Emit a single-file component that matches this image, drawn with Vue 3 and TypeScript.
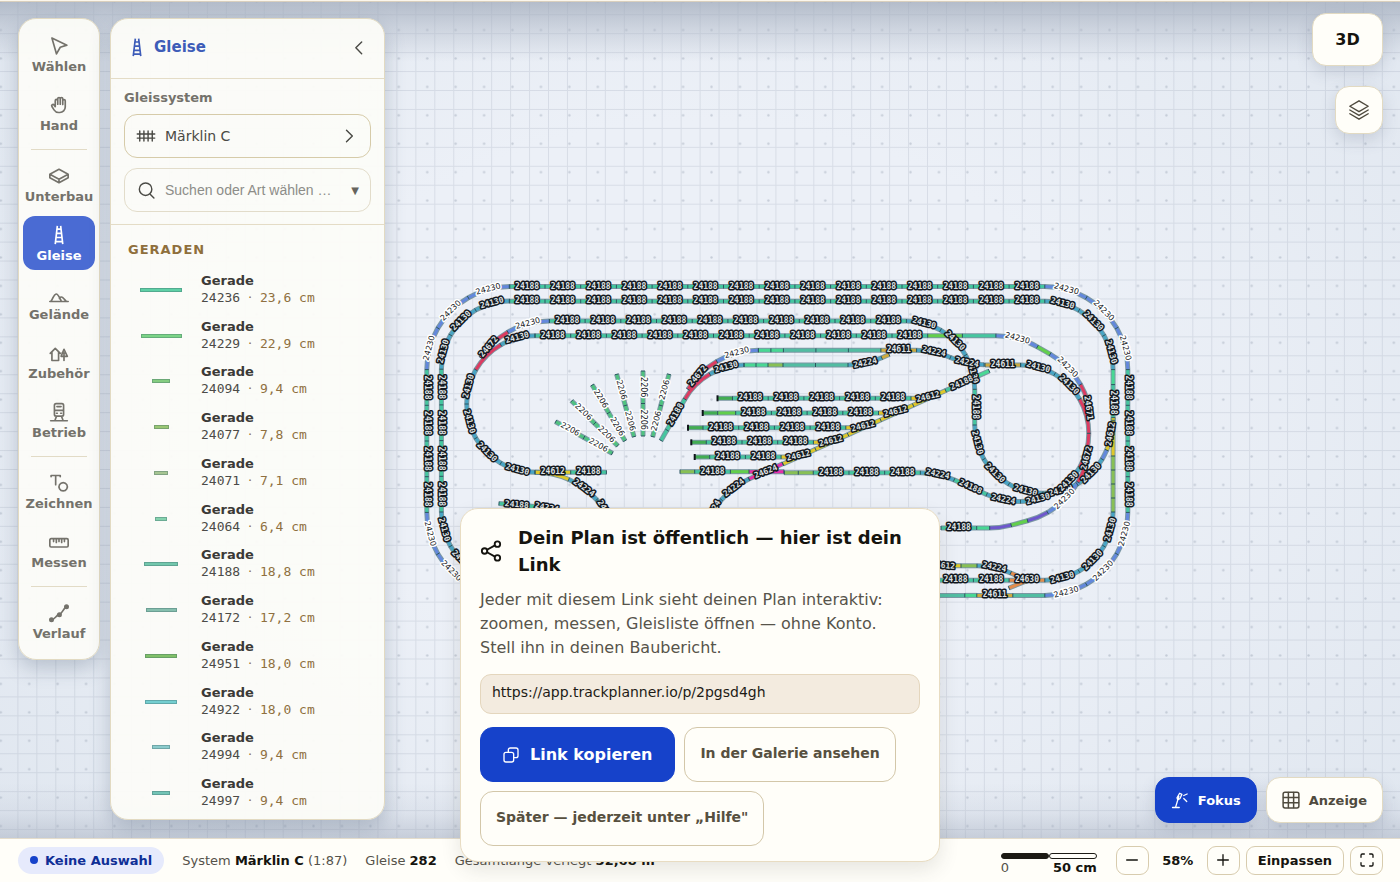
<script setup lang="ts">
import { ref } from 'vue'

interface Piece { len?: number; r?: number; deg?: number; color: string; label?: string; light?: boolean }
interface Drawn { d: string; color: string }
interface Tick { x1: number; y1: number; x2: number; y2: number }
interface Label { x: number; y: number; a: number; text: string; light: boolean }

const TEAL = '#45c69f', SEA = '#52bda2', MINT = '#48d894', SKY = '#48a5c4', BLUE = '#6388dc', RED = '#dc3c62'
const YEL = '#dfc82a', OCHRE = '#cdaa40', ORANGE = '#e28c4c', GREEN = '#62cf4c', MOSS = '#88c055', DARK = '#42ad52'
const PINK = '#e62eaa', VIOLET = '#6e58cc', LEAF = '#4fc280'
const UNIT = 35.7, R1 = 68.3, R2 = 83

const drawn: Drawn[] = []
const ticks: Tick[] = []
const labels: Label[] = []

const rad = (d: number) => (d * Math.PI) / 180
const f = (n: number) => Math.round(n * 100) / 100

function upright(a: number): number {
  let v = ((a % 360) + 360) % 360
  if (v > 180) v -= 360
  if (v > 91) v -= 180
  if (v <= -89) v += 180
  return v
}
function mark(x: number, y: number, h: number) {
  const nx = -Math.sin(rad(h)) * 2, ny = Math.cos(rad(h)) * 2
  ticks.push({ x1: f(x - nx), y1: f(y - ny), x2: f(x + nx), y2: f(y + ny) })
}
function tag(x: number, y: number, a: number, text: string, light = false) {
  labels.push({ x: f(x), y: f(y), a: f(a), text, light })
}
function lay(x: number, y: number, h: number, pieces: Piece[]) {
  mark(x, y, h)
  for (const p of pieces) {
    let nx = x, ny = y, mx = x, my = y, mh = h, nh = h, d = ''
    if (p.len !== undefined) {
      nx = x + Math.cos(rad(h)) * p.len
      ny = y + Math.sin(rad(h)) * p.len
      mx = (x + nx) / 2
      my = (y + ny) / 2
      d = `M${f(x)} ${f(y)}L${f(nx)} ${f(ny)}`
    } else {
      const r = p.r ?? R1, deg = p.deg ?? 30, s = deg > 0 ? 1 : -1
      const cx = x - Math.sin(rad(h)) * r * s, cy = y + Math.cos(rad(h)) * r * s
      nh = h + deg
      mh = h + deg / 2
      nx = cx + Math.sin(rad(nh)) * r * s
      ny = cy - Math.cos(rad(nh)) * r * s
      mx = cx + Math.sin(rad(mh)) * r * s
      my = cy - Math.cos(rad(mh)) * r * s
      d = `M${f(x)} ${f(y)}A${r} ${r} 0 0 ${s > 0 ? 1 : 0} ${f(nx)} ${f(ny)}`
    }
    drawn.push({ d, color: p.color })
    if (p.label) tag(mx, my, upright(mh), p.label, p.light)
    x = nx
    y = ny
    h = nh
    mark(x, y, h)
  }
}
const many = (n: number, p: Piece): Piece[] => Array.from({ length: n }, () => p)
const bar = (len: number, color: string, label?: string): Piece => ({ len, color, label })
const S: Piece = bar(UNIT, TEAL, '24188')
const c1 = (s: number): Piece => ({ r: R1, deg: 30 * s, color: SKY, label: '24130' })
const c2 = (s: number): Piece => ({ r: R2, deg: 30 * s, color: BLUE, label: '24230', light: true })
const bend = (r: number, deg: number, color: string, label?: string): Piece => ({ r, deg, color, label })

// double main loop
lay(509.3, 286.6, 0, [...many(15, S), ...many(3, c2(1)), ...many(4, S), ...many(3, c2(1)),
  bar(32, SEA), bar(36, OCHRE, '24611'), bar(12, MINT), bar(455, SEA), ...many(3, c2(1)), ...many(4, S), ...many(3, c2(1))])
lay(509.3, 301.3, 0, [...many(15, S), ...many(3, c1(1)), bar(15, MINT), S, bar(UNIT, YEL), ...many(4, bar(14, MOSS)),
  ...many(3, c1(1)), bar(UNIT, ORANGE, '24630'), S, S, bar(428, TEAL), ...many(3, c1(1)), ...many(4, S), ...many(3, c1(1))])

// inner western curve
lay(535, 335.7, 180, [c1(-1), bend(R1, -30, RED), ...many(4, c1(-1)), bar(UNIT, YEL, '24612'), S])
lay(549.4, 321, 180, [c2(-1), bend(R2, -26, RED)])
lay(535, 472.3, 0, [bend(R2, 24, YEL), bend(R2, 24, SKY, '24224'), bend(R1, 24, SKY, '24224')])
lay(499, 503.5, 5, [S, bar(5, MINT), bend(R2, 10, SKY, '24224')])

// inner upper tracks and eastern curve
lay(549.4, 321, 0, [...many(10, S), ...many(3, c1(1)), S, ...many(5, c1(-1)), bend(R2, -7, BLUE), bend(R2, -23, YEL)])
lay(535, 335.7, 0, [...many(11, S), bar(34.7, GREEN), bar(33.5, TEAL), c2(1), bar(14.7, GREEN), c2(1), bend(R1, 30, RED)])
lay(1020.5, 365, 0, [c1(1), c1(1), bend(R1, 30, RED), bend(R1, 30, RED), c1(1), c1(1), bend(R2, 24, SKY, '24224'),
  S, bend(R2, -24, SKY, '24224'), ...many(3, S), bar(15, MOSS), bar(14, MOSS)])
lay(941, 528, 0, [S, bar(13, MINT), bend(R2, -15, VIOLET), bar(17, GREEN), bend(R2, -15, VIOLET), c2(-1), bend(R2, -26, RED)])

// middle return curve
lay(758.4, 350.3, 180, [c2(-1), bend(R2, -28, RED)])
lay(744, 365, 180, [c1(-1), bend(R1, -30, RED), S, bar(12, TEAL)])
lay(758.4, 350.3, 0, [bar(12.5, MINT), bar(12.5, MINT), bar(32.5, SEA), bar(32.5, SEA), bar(32.5, SEA), bar(UNIT, OCHRE, '24611'),
  bend(R2, 24, SKY, '24224'), bend(R2, -24, SKY, '24224')])
lay(744, 365, 0, [bar(12, MINT), bar(12, MINT), bar(15, MOSS), bar(32.5, SEA), bar(32.5, SEA), bend(R2, -24, SKY, '24224'), bar(8, OCHRE)])
lay(985, 365, 0, [bar(UNIT, OCHRE, '24611')])

// yard ladder
lay(783, 464, -24.3, [bar(UNIT, YEL), bar(UNIT, YEL), bar(UNIT, YEL), bar(UNIT, YEL), bar(UNIT, YEL), S, bar(12, MINT)])
lay(749, 479, -24.3, [bar(37, PINK)])
lay(749, 479, 155, [bend(R2, -24, SKY, '24224'), bend(R2, -20, SKY, '24224')])
const yard = [
  { y: 398.3, x: 717.5, lead: [bar(15, DARK)], n: 5 },
  { y: 413, x: 702.7, lead: [bar(15, DARK), bar(18, GREEN)], n: 4 },
  { y: 427.7, x: 688, lead: [bar(15, DARK)], n: 4 },
  { y: 442.3, x: 691.3, lead: [bar(15, DARK)], n: 3 },
  { y: 457, x: 694.7, lead: [bar(15, DARK)], n: 2 },
]
for (const row of yard) lay(row.x, row.y, 0, [...row.lead, ...many(row.n, S), bar(14, YEL)])
lay(680, 471.7, 0, [bar(14.7, MOSS), S, bar(18.6, GREEN), bar(35, PINK)])

// south-east junction
lay(925, 565.8, 0, [bar(36, YEL), bar(16, MOSS), bend(R2, 24, SKY, '24224'), bar(18, ORANGE)])
lay(1009, 588, -22, [bar(18, ORANGE)])

// turntable spokes
const spokes = [
  [555.7, 421.7, 612.3, 453.3], [571.7, 401, 617.7, 445.7], [592.3, 385, 625, 440.7],
  [616.7, 374.3, 634, 436.7], [643, 371, 643, 436], [669, 374.3, 652.7, 436.7],
]
for (const [x1, y1, x2, y2] of spokes) {
  const len = Math.hypot(x2 - x1, y2 - y1) / 2
  const h = (Math.atan2(y2 - y1, x2 - x1) * 180) / Math.PI
  lay(x1, y1, h, many(2, { len, color: LEAF, label: '2206', light: true }))
}

tag(489, 347, -50, '24672')
tag(698, 376, -50, '24672')
tag(1088, 408, 82, '24671')
tag(1087, 458, -76, '24672')
tag(1111, 434, -80, '24612')
tag(766, 472, -22, '24624')
tag(943, 566, 5, '24612')
for (let i = 0; i < 5; i++) tag(798.5 + i * 32.4, 456 - i * 14.7, -14, '24612')

const systemName = 'Märklin C'
const tools = ref([
  { id: 'select', name: 'Wählen' }, { id: 'hand', name: 'Hand' }, { id: '-1', name: '' },
  { id: 'base', name: 'Unterbau' }, { id: 'track', name: 'Gleise' }, { id: 'terrain', name: 'Gelände' },
  { id: 'props', name: 'Zubehör' }, { id: 'train', name: 'Betrieb' }, { id: '-2', name: '' },
  { id: 'draw', name: 'Zeichnen' }, { id: 'measure', name: 'Messen' }, { id: '-3', name: '' },
  { id: 'profile', name: 'Verlauf' },
])
const active = ref('track')
const parts = [
  { no: '24236', cm: '23,6', w: 42, c: '#5fd0a6' }, { no: '24229', cm: '22,9', w: 41, c: '#7bd486' },
  { no: '24094', cm: '9,4', w: 18, c: '#84cc80' }, { no: '24077', cm: '7,8', w: 15, c: '#9ac774' },
  { no: '24071', cm: '7,1', w: 14, c: '#a6c592' }, { no: '24064', cm: '6,4', w: 12, c: '#85d2ae' },
  { no: '24188', cm: '18,8', w: 34, c: '#72c7ac' }, { no: '24172', cm: '17,2', w: 31, c: '#86bfae' },
  { no: '24951', cm: '18,0', w: 32, c: '#80c068' }, { no: '24922', cm: '18,0', w: 32, c: '#74ced0' },
  { no: '24994', cm: '9,4', w: 18, c: '#8bcbcc' }, { no: '24997', cm: '9,4', w: 18, c: '#72c4b6' },
]
const search = ref('')
const link = ref('https://app.trackplanner.io/p/2pgsd4gh')
</script>

<template>
  <div class="app">
    <svg class="canvas" aria-label="Gleisplan">
      <defs>
        <pattern id="grid" x="17.4" y="14.2" width="18.95" height="18.95" patternUnits="userSpaceOnUse">
          <path d="M0 .5H18.95M.5 0V18.95" class="gridline" />
        </pattern>
        <pattern id="dots" x="15" y="15.8" width="28.43" height="28.43" patternUnits="userSpaceOnUse">
          <circle cx="14.2" cy="14.2" r="1.2" class="griddot" />
        </pattern>
      </defs>
      <rect width="100%" height="100%" fill="url(#grid)" />
      <rect width="100%" height="100%" fill="url(#dots)" />
      <g class="bed"><path v-for="(p, i) in drawn" :key="i" :d="p.d" /></g>
      <g class="rail"><path v-for="(p, i) in drawn" :key="i" :d="p.d" :stroke="p.color" /></g>
      <g class="tick"><line v-for="(t, i) in ticks" :key="i" v-bind="t" /></g>
      <g class="stop"><path v-for="r in yard" :key="r.y" :d="`M${r.x} ${r.y - 3}v6`" /></g>
      <g>
        <text v-for="(l, i) in labels" :key="i" :class="['tag', { light: l.light }]" :transform="`translate(${l.x} ${l.y}) rotate(${l.a})`" y="2">{{ l.text }}</text>
      </g>
    </svg>
    <div class="shade"></div>
    <div class="topline"></div>

    <main class="stage">
      <nav class="tools" aria-label="Werkzeuge">
        <template v-for="t in tools" :key="t.id">
          <hr v-if="!t.name">
          <button v-else type="button" class="tool" :class="{ on: active === t.id }" @click="active = t.id">
            <svg viewBox="0 0 24 24" class="ico" aria-hidden="true">
              <path v-if="t.id === 'select'" d="M3.5 2.500l18 8.500-8 2.500-4.500 8z" />
              <path v-else-if="t.id === 'hand'" d="M7.5 14V6.800a1.500 1.500 0 0 1 3 0V11V4.500a1.500 1.500 0 0 1 3 0V11V4.500a1.500 1.500 0 0 1 3 0V11.500V7a1.500 1.500 0 0 1 3 0v7.500a6.500 6.500 0 0 1-6.500 6.500h-1.500c-2.500 0-4.200-1.200-5.500-3.200l-2.500-4a1.500 1.500 0 0 1 2.500-1.700z" />
              <path v-else-if="t.id === 'base'" d="M12 4L1 10l11 6 11-6zM1 10v4l11 6 11-6v-4M12 16v4" />
              <path v-else-if="t.id === 'track'" class="lattice" d="M10 1L7.500 23M14 1L16.500 23M9.500 5h5M9 10h6M8.500 15h7M8 20h8" />
              <path v-else-if="t.id === 'terrain'" d="M1 21h22M2.500 20.500C5 17.500 5.500 12.500 8.500 12c2.500-.300 4 4.500 6 8M12.500 17.500c1-2 2.500-2.500 4-1.200s2 2.500 4 4.200" />
              <path v-else-if="t.id === 'props'" d="M1.500 12.500L7.500 6.500l6 6M3.500 11v10h8V11M18 21V13M14.500 16L18 7.500 22 16zM15.500 12h4.500" />
              <path v-else-if="t.id === 'train'" d="M6.500 4a2 2 0 0 1 2-2h7a2 2 0 0 1 2 2v11a2 2 0 0 1-2 2h-7a2 2 0 0 1-2-2zM6.500 10h11M9.500 5.500h5M9 13.500h1M14 13.500h1M9 17l-2 5.500M15 17l2 5.500M2 22.500h20" />
              <path v-else-if="t.id === 'draw'" d="M2.500 4.500V3h11v1.500M8 3v11M17 11.500a5 5 0 1 0 .010 0z" />
              <path v-else-if="t.id === 'measure'" d="M2.500 8h19a1.500 1.500 0 0 1 1.500 1.500v7a1.500 1.500 0 0 1-1.500 1.500h-19A1.500 1.500 0 0 1 1 16.500v-7A1.500 1.500 0 0 1 2.500 8zM5.500 8v3.500M8.800 8v4.500M12 8v3.500M15.200 8v4.500M18.500 8v3.500" />
              <g v-else><path d="M3 20c5-1 5-5 9-6s4-6 9-10" /><circle cx="3" cy="20" r="2" class="solid" /><circle cx="12.500" cy="14" r="2" class="solid" /><circle cx="21" cy="4.500" r="2" class="solid" /></g>
            </svg>
            <span>{{ t.name }}</span>
          </button>
        </template>
      </nav>

      <aside class="panel">
        <header class="phead">
          <svg viewBox="0 0 24 24" class="ico lattice" aria-hidden="true"><path d="M10 2L7.500 23M14 2L16.500 23M9.500 6h5M9 11h6M8.500 16h7M8 20.500h8" /></svg>
          <h2>Gleise</h2>
          <button type="button" class="bare" aria-label="Einklappen"><svg viewBox="0 0 24 24" class="ico thin"><path d="M14 6l-7 7 7 7" /></svg></button>
        </header>
        <section class="filters">
          <span class="caption" id="sys">Gleissystem</span>
          <button type="button" class="field" aria-labelledby="sys">
            <svg viewBox="0 0 24 24" class="ico thin"><path d="M1.500 9.500h21M1.500 14.500h21M4.500 6v12M9.500 6v12M14.500 6v12M19.500 6v12" /></svg>
            <span>{{ systemName }}</span>
            <svg viewBox="0 0 24 24" class="ico thin"><path d="M9 5l7 7-7 7" /></svg>
          </button>
          <div class="field find">
            <svg viewBox="0 0 24 24" class="ico thin"><circle cx="11.500" cy="11" r="7.500" /><path d="M17 17l4.500 4.500" /></svg>
            <input v-model="search" type="text" aria-label="Gleise suchen" placeholder="Suchen oder Art wählen …">
            <button type="button" class="bare caret" aria-label="Art wählen">▼</button>
          </div>
        </section>
        <h3>GERADEN</h3>
        <ul class="parts">
          <li v-for="p in parts" :key="p.no">
            <button type="button" class="part">
              <span class="pic"><i :style="{ width: p.w + 'px', background: p.c }"></i></span>
              <span class="txt"><b>Gerade</b><code>{{ p.no }} <em><s>·</s> {{ p.cm }} cm</em></code></span>
            </button>
          </li>
        </ul>
      </aside>

      <div class="views">
        <button type="button" class="card three">3D</button>
        <button type="button" class="card layers" aria-label="Ebenen"><svg viewBox="0 0 24 24" class="ico thin"><path d="M12 1L1 7.500l11 6.500 11-6.500zM1 12l11 6.500L23 12M1 16.500L12 23l11-6.500" /></svg></button>
      </div>

      <div class="modes">
        <button type="button" class="card focus"><svg viewBox="0 0 24 24" class="ico thin"><path d="M2 22h9M6 22l4.500-15M9 12l-1-3 3.500-6 3 1.500-2.500 5.500zM17 6l4.500-2M17 10l4 4" /></svg>Fokus</button>
        <button type="button" class="card show"><svg viewBox="0 0 24 24" class="ico"><rect x="1.500" y="1.500" width="21" height="21" rx="2.500" /><path d="M2 8.500h20M2 15.500h20M8.500 2v20M15.500 2v20" /></svg>Anzeige</button>
      </div>
    </main>

    <footer class="status">
      <span class="chip"><i></i>Keine Auswahl</span>
      <span>System <b>{{ systemName }}</b> (1:87)</span>
      <span>Gleise <b>282</b></span>
      <span>Gesamtlänge verlegt <b>52,68 m</b></span>
      <div class="zoom">
        <div class="scale"><div class="ruler"><i></i><i></i></div><div class="ends"><span>0</span><b>50 cm</b></div></div>
        <button type="button" aria-label="Verkleinern"><svg viewBox="0 0 24 24" class="ico"><path d="M4 12h16" /></svg></button>
        <b class="pct">58%</b>
        <button type="button" aria-label="Vergrößern"><svg viewBox="0 0 24 24" class="ico"><path d="M4 12h16M12 4v16" /></svg></button>
        <button type="button" class="fit">Einpassen</button>
        <button type="button" aria-label="Vollbild"><svg viewBox="0 0 24 24" class="ico"><path d="M3 8V5a2 2 0 0 1 2-2h3M16 3h3a2 2 0 0 1 2 2v3M21 16v3a2 2 0 0 1-2 2h-3M8 21H5a2 2 0 0 1-2-2v-3" /></svg></button>
      </div>
    </footer>

    <section class="share" role="dialog" aria-labelledby="share-title">
      <header>
        <svg viewBox="0 0 24 24" class="ico"><circle cx="5" cy="12" r="3" /><circle cx="19" cy="4.500" r="3" /><circle cx="19" cy="19.500" r="3" /><path d="M7.700 10.600l8.600-4.700M7.700 13.400l8.600 4.700" /></svg>
        <h1 id="share-title">Dein Plan ist öffentlich — hier ist dein Link</h1>
      </header>
      <p>Jeder mit diesem Link sieht deinen Plan interaktiv: zoomen, messen, Gleisliste öffnen — ohne Konto. Stell ihn in deinen Baubericht.</p>
      <input v-model="link" type="text" readonly aria-label="Link zum Plan">
      <div class="acts">
        <button type="button" class="primary"><svg viewBox="0 0 24 24" class="ico"><rect x="1.500" y="8" width="14.500" height="14.500" rx="3" /><path d="M8 8V4.500a3 3 0 0 1 3-3h8.500a3 3 0 0 1 3 3V13a3 3 0 0 1-3 3H16" /></svg>Link kopieren</button>
        <button type="button">In der Galerie ansehen</button>
        <button type="button">Später — jederzeit unter „Hilfe"</button>
      </div>
    </section>
  </div>
</template>

<style>
body { margin: 0; }
</style>

<style scoped>
* { box-sizing: border-box; }
.app {
  position: relative; display: flex; flex-direction: column; height: 100vh; overflow: hidden;
  font-family: "DejaVu Sans", sans-serif; font-size: 13px; color: #4a4a45;
  background: radial-gradient(ellipse at 50% 45%, #ecf0f7 40%, #dfe6ef 100%);
}
button, input { font: inherit; color: inherit; margin: 0; }
button { cursor: pointer; }
.canvas { position: absolute; inset: 0; width: 100%; height: 100%; }
.gridline { stroke: #8592a5; stroke-opacity: .2; fill: none; }
.griddot { fill: #7e8a9c; fill-opacity: .34; }
.bed path { fill: none; stroke: #4b7480; stroke-opacity: .7; stroke-width: 5; }
.rail path { fill: none; stroke-width: 3; }
.tick line { stroke: #2b5560; stroke-width: 1; }
.stop path { stroke: #10151b; stroke-width: 2; }
.tag {
  font: 700 8px "DejaVu Sans Mono", monospace; text-anchor: middle; fill: #dfe3e6;
  stroke: #14181e; stroke-width: 3px; stroke-linejoin: round; paint-order: stroke;
}
.tag.light { font: 400 8px "DejaVu Sans", sans-serif; fill: #15181d; stroke: #fff; }
.shade {
  position: absolute; inset: 0 0 44px; pointer-events: none;
  background: linear-gradient(rgba(160, 170, 186, .75) 0, rgba(172, 181, 196, .45) 28px, rgba(200, 208, 220, 0) 62px),
    linear-gradient(0deg, rgba(160, 169, 186, .45), rgba(180, 188, 204, .2) 25px, rgba(190, 198, 214, 0) 55px);
}
.topline { position: relative; flex: none; height: 2px; background: #fbf6ec; border-bottom: 1px solid #d9cfbd; }
.stage { position: relative; flex: 1; min-height: 0; display: flex; align-items: flex-start; gap: 10px; padding: 16px 18px 18px; }
.ico { width: 20px; height: 20px; flex: none; fill: none; stroke: currentColor; stroke-width: 2; stroke-linecap: round; stroke-linejoin: round; }
.ico.thin { stroke-width: 1.7; }
.solid { fill: currentColor; }
.lattice { stroke-linecap: butt; }

.tools, .panel {
  background: rgba(252, 252, 248, .95); border: 1px solid #e2dac2; border-radius: 18px;
  box-shadow: 0 8px 20px rgba(70, 85, 110, .28);
}
.tools { width: 82px; padding: 8px 4px 11px; display: flex; flex-direction: column; align-items: center; gap: 5px; }
.tools hr { width: 56px; height: 1px; margin: 4px 0 2px; border: 0; background: #e2dbc6; }
.tool {
  width: 72px; height: 54px; padding: 9px 0 0; border: 0; border-radius: 12px; background: none; color: #74726b;
  display: flex; flex-direction: column; align-items: center; gap: 3px; font-weight: 700; line-height: 16px;
}
.tool.on { background: #4a6bd3; color: #fff; }

.panel { width: 275px; height: 802px; max-height: 100%; display: flex; flex-direction: column; overflow: hidden; }
.phead { display: flex; flex: none; align-items: center; gap: 7px; height: 60px; padding: 0 14px 3px 16px; border-bottom: 1px solid #e4dcc6; color: #3d5cb8; }
.phead h2 { flex: 1; margin: 0; font-size: 15px; line-height: 20px; }
.bare { border: 0; padding: 0; background: none; color: #4a4a45; display: flex; }
.filters { padding: 11px 13px 12px; border-bottom: 1px solid #e4dcc6; }
.caption { display: block; font-weight: 700; line-height: 16px; color: #74726b; margin-bottom: 8px; }
.field {
  display: flex; align-items: center; gap: 9px; width: 100%; height: 44px; padding: 0 11px; font-size: 14px;
  text-align: left; background: none; border: 1px solid #d6cba9; border-radius: 13px;
}
.field span { flex: 1; }
.field.find { margin-top: 10px; border-color: #e2dcca; }
.find input { flex: 1; min-width: 0; border: 0; padding: 0; outline: 0; background: none; font: 14px "Liberation Sans", sans-serif; }
.find input::placeholder { color: #8d8d88; opacity: 1; }
.caret { font-size: 10px; color: #66645e; }
h3 { margin: 0; padding: 17px 17px 8px; font-size: 13px; line-height: 16px; letter-spacing: 1px; color: #8f6f3c; }
.parts { flex: 1; display: grid; grid-auto-rows: 1fr; margin: 0 0 4px; padding: 0; list-style: none; }
.part { display: flex; align-items: center; width: 100%; height: 100%; padding: 0 20px; border: 0; background: none; text-align: left; }
.pic { width: 60px; display: flex; justify-content: center; padding-top: 2px; }
.pic i { height: 4px; border: 1px solid rgba(60, 100, 100, .35); }
.txt { margin-left: 10px; display: flex; flex-direction: column; line-height: 17px; color: #4c4b47; }
.txt b { color: #3b3a37; }
.txt code { font-family: "DejaVu Sans Mono", monospace; }
.txt em { font-style: normal; color: #8f7040; }
.txt s { font-family: "DejaVu Sans", sans-serif; text-decoration: none; }

.card {
  display: flex; align-items: center; justify-content: center; border: 1px solid #e2dac2; border-radius: 14px;
  background: #fffef9; font-weight: 700; color: #4f4a3e; box-shadow: 0 6px 16px rgba(70, 85, 110, .18);
}
.views { position: absolute; top: 11px; right: 17px; display: flex; flex-direction: column; align-items: flex-end; gap: 20px; }
.three { width: 71px; height: 53px; font-size: 16px; color: #15140f; }
.layers { width: 48px; height: 48px; }
.modes { position: absolute; right: 17px; bottom: 15px; display: flex; gap: 9px; }
.modes .card { height: 46px; padding: 0 15px; gap: 9px; }
.modes .ico { width: 18px; height: 18px; }
.modes .focus { background: #1642ca; border-color: #1642ca; color: #fff; }

.status {
  position: relative; flex: none; height: 44px; display: flex; align-items: center; gap: 18px; padding: 0 17px 1px 18px;
  background: #fffef9; border-top: 1px solid #e4dccb; color: #55524a; white-space: nowrap;
}
.status b { color: #15140f; }
.chip { display: flex; align-items: center; gap: 7px; height: 27px; padding: 0 12px; border-radius: 14px; background: #e6eafc; color: #0f2f96; font-weight: 700; }
.chip i { width: 8px; height: 8px; border-radius: 4px; background: #1642ca; }
.zoom { margin-left: auto; display: flex; align-items: center; gap: 6px; }
.zoom button { display: flex; align-items: center; justify-content: center; width: 33px; height: 29px; padding: 0; border: 1px solid #d8ccae; border-radius: 9px; background: none; color: #15140f; font-weight: 700; }
.zoom .ico { width: 16px; height: 16px; }
.zoom .fit { width: auto; padding: 0 11px; }
.pct { width: 46px; text-align: center; }
.scale { width: 96px; margin-right: 13px; padding-top: 6px; }
.ruler { display: flex; }
.ruler i { flex: 1; height: 6px; border: 1px solid #1c1a14; border-radius: 3px; }
.ruler i:first-child { background: #1c1a14; }
.ends { display: flex; justify-content: space-between; line-height: 12px; margin-top: 3px; }

.share {
  position: absolute; left: 50%; bottom: 20px; transform: translateX(-50%); width: 480px; max-width: 94%; padding: 15px 19px;
  background: #fffef9; border: 1px solid #e8dcc2; border-radius: 18px; box-shadow: 0 8px 20px rgba(60, 60, 50, .12);
}
.share header { display: flex; align-items: center; gap: 16px; }
.share header .ico { width: 22px; height: 22px; color: #15140f; }
h1 { margin: 0; font-size: 18px; line-height: 27px; color: #15140f; }
p { max-width: 416px; margin: 10px 0 14px; font-size: 16px; line-height: 24px; color: #57544b; }
.share input { display: block; width: 100%; height: 40px; padding: 0 11px 4px; font-size: 14px; border: 1px solid #e4d6bd; border-radius: 11px; background: #f3ebdf; color: #1d1b16; }
.acts { display: flex; flex-wrap: wrap; gap: 9px; margin-top: 13px; }
.acts button { display: flex; align-items: center; height: 55px; padding: 0 15px 3px; border: 1px solid #d3c7a9; border-radius: 13px; background: none; font-size: 14px; font-weight: 700; color: #57503f; }
.acts .primary { gap: 11px; padding: 0 22px; border-color: #1642ca; background: #1642ca; color: #fff; font-size: 16px; }
.acts .ico { width: 16px; height: 16px; }
</style>
